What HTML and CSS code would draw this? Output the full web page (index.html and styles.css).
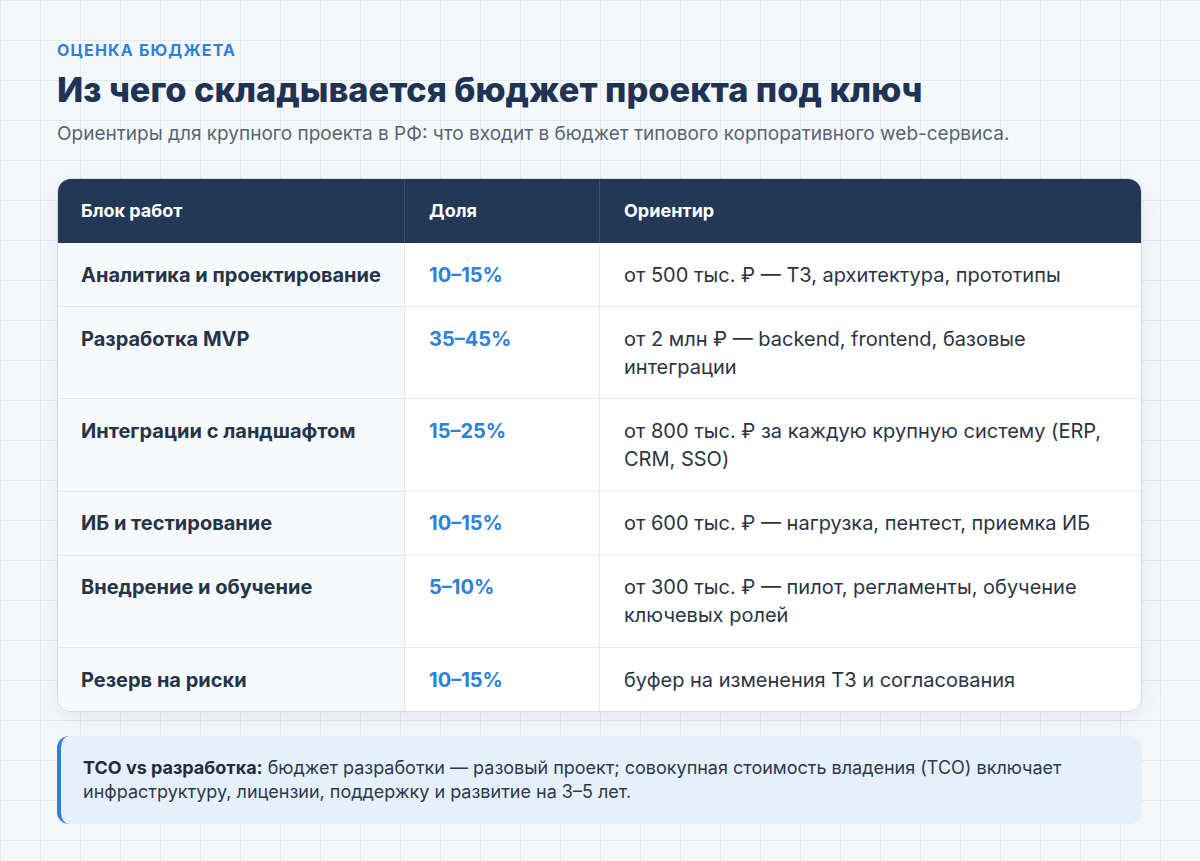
FILE: index.html
```html
<!DOCTYPE html>
<html lang="ru">
<head>
<meta charset="utf-8">
<title>Оценка бюджета</title>
<link rel="stylesheet" href="styles.css">
</head>
<body>
<main class="page">
  <div class="eyebrow">ОЦЕНКА БЮДЖЕТА</div>
  <h1 class="title">Из чего складывается бюджет проекта под ключ</h1>
  <p class="subtitle">Ориентиры для крупного проекта в РФ: что входит в бюджет типового корпоративного web-сервиса.</p>

  <div class="card">
    <table class="budget">
      <colgroup>
        <col class="c1"><col class="c2"><col class="c3">
      </colgroup>
      <thead>
        <tr><th>Блок работ</th><th>Доля</th><th>Ориентир</th></tr>
      </thead>
      <tbody>
        <tr><td class="name">Аналитика и проектирование</td><td class="share">10–15%</td><td class="note">от 500 тыс. ₽ — ТЗ, архитектура, прототипы</td></tr>
        <tr><td class="name">Разработка MVP</td><td class="share">35–45%</td><td class="note">от 2 млн ₽ — backend, frontend, базовые интеграции</td></tr>
        <tr><td class="name">Интеграции с ландшафтом</td><td class="share">15–25%</td><td class="note">от 800 тыс. ₽ за каждую крупную систему (ERP, CRM, SSO)</td></tr>
        <tr><td class="name">ИБ и тестирование</td><td class="share">10–15%</td><td class="note">от 600 тыс. ₽ — нагрузка, пентест, приемка ИБ</td></tr>
        <tr><td class="name">Внедрение и обучение</td><td class="share">5–10%</td><td class="note">от 300 тыс. ₽ — пилот, регламенты, обучение ключевых ролей</td></tr>
        <tr><td class="name">Резерв на риски</td><td class="share">10–15%</td><td class="note">буфер на изменения ТЗ и согласования</td></tr>
      </tbody>
    </table>
  </div>

  <div class="callout"><strong>TCO vs разработка:</strong> бюджет разработки — разовый проект; совокупная стоимость владения (TCO) включает инфраструктуру, лицензии, поддержку и развитие на 3–5 лет.</div>
</main>
</body>
</html>
```

FILE: styles.css
```css
* { box-sizing: border-box; }
html, body { margin: 0; padding: 0; }
body {
  font-family: Inter, "Noto Sans", sans-serif;
  color: #1f2d42;
  background-color: #f5f8fb;
  background-image:
    linear-gradient(to right, #e4e9ef 1px, transparent 1px),
    linear-gradient(to bottom, #e4e9ef 1px, transparent 1px);
  background-size: 40px 40px;
  min-height: 861px;
}
.page {
  padding: 40px 58px 36px 57px;
}
.eyebrow {
  font-size: 16px;
  line-height: 20px;
  font-weight: 700;
  letter-spacing: 1.2px;
  color: #2f80d8;
}
.title {
  margin: 9px 0 0;
  font-size: 34.3px;
  line-height: 42px;
  font-weight: 800;
  letter-spacing: 0;
  color: #1f3454;
}
.subtitle {
  margin: 10px 0 0;
  font-size: 19px;
  line-height: 26px;
  color: #5a6472;
}
.card {
  margin-top: 31px;
  background: #fff;
  border: 1px solid #d3dde8;
  border-radius: 14px;
  overflow: hidden;
  box-shadow: 0 8px 24px rgba(30, 50, 80, 0.08);
}
.budget {
  width: 100%;
  border-collapse: collapse;
  table-layout: fixed;
}
.c1 { width: 32%; }
.c2 { width: 18%; }
.c3 { width: 50%; }
.budget th {
  background: #233857;
  color: #fff;
  text-align: left;
  font-size: 18px;
  line-height: 24px;
  font-weight: 700;
  padding: 20px 18px 20px 23px;
  border-left: 1px solid #3b4e6b;
}
.budget th:first-child { border-left: none; }
.budget th + th { padding-left: 24px; }
.budget td {
  padding: 17.6px 18px 17.6px 24px;
  font-size: 20px;
  line-height: 28px;
  vertical-align: top;
  border-top: 1px solid #e4eaf1;
  border-left: 1px solid #e4eaf1;
}
.budget tbody tr:first-child td { border-top: none; }
.budget td:first-child { border-left: none; padding-left: 23px; }
.budget td.name {
  background: #f7fafd;
  font-weight: 700;
  color: #243449;
  white-space: nowrap;
}
.budget td.share {
  font-weight: 700;
  color: #2f80d8;
}
.budget td.note {
  color: #2a3544;
}
.callout {
  margin-top: 24px;
  background: #e6f0fa;
  border-left: 4px solid #2f80d8;
  border-radius: 12px;
  padding: 20px 22px;
  font-size: 18px;
  line-height: 24px;
  color: #2a3a50;
}
.callout strong {
  color: #1f2d42;
  font-weight: 700;
}
```
